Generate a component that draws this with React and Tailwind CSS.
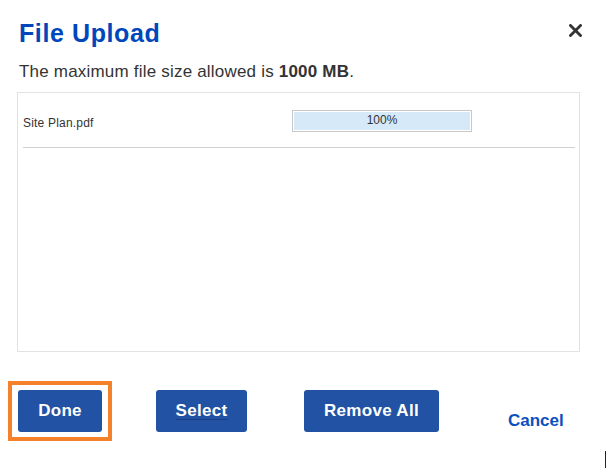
export default function App() {
  return (
    <div
      className="relative w-[606px] h-[468px] overflow-hidden bg-white"
      style={{ fontFamily: '"Liberation Sans", Arial, sans-serif' }}
    >
      <div className="pt-[18px] px-[17px]">
        <div className="flex justify-between items-start">
          <h1 className="ml-[2px] text-[25px] leading-[30px] font-bold tracking-[0.6px] text-[#0047bb]">File Upload</h1>
          <svg className="mt-[6px] mr-[7px]" width="13" height="13" viewBox="0 0 13 13">
            <path d="M1.5 1.5 L11.5 11.5 M11.5 1.5 L1.5 11.5" stroke="#333" strokeWidth="2.8" strokeLinecap="square" />
          </svg>
        </div>
        <p className="mt-[14px] ml-[2px] text-[17px] leading-[20px] tracking-[0.2px] text-[#333]">
          The maximum file size allowed is <span className="font-bold">1000 MB</span>.
        </p>
        <div className="mt-[10px] w-[563px] h-[260px] border border-[#e2e2e2]">
          <div className="flex items-start pt-[17px] px-[5px]">
            <div className="w-[269px] mt-[5px] text-[12px] leading-[16px] tracking-[0.2px] text-[#333]">Site Plan.pdf</div>
            <div className="w-[180px] h-[22px] border border-[#c8c8c8] p-px">
              <div className="h-full bg-[#d6e9f9] text-center text-[12px] leading-[16px] text-[#333]">100%</div>
            </div>
          </div>
          <div className="mt-[15px] ml-[5px] mr-[4px] h-px bg-[#d0d0d0]" />
        </div>
        <div className="mt-[38px] flex items-start">
          <div className="relative ml-[1px]">
            <span className="absolute -left-[10px] -right-[10px] -top-[9px] -bottom-[9px] border-[4px] border-[#f5822a]" />
            <button className="relative block w-[84px] h-[42px] rounded-[3px] bg-[#2152a3] text-white text-[17px] font-bold tracking-[0.3px]">
              Done
            </button>
          </div>
          <button className="ml-[54px] w-[91px] h-[42px] rounded-[3px] bg-[#2152a3] text-white text-[17px] font-bold tracking-[0.3px]">
            <span className="underline decoration-[#1a3d8a] underline-offset-[3px]">Select</span>
          </button>
          <button className="ml-[57px] w-[135px] h-[42px] rounded-[3px] bg-[#2152a3] text-white text-[17px] font-bold tracking-[0.3px]">
            Remove All
          </button>
          <span className="ml-[69px] mt-[21px] text-[17px] leading-[20px] font-bold text-[#0b4fc0]">Cancel</span>
        </div>
      </div>
      <div className="absolute left-[605px] top-[451px] w-px h-[17px] bg-[#222]" />
    </div>
  );
}
